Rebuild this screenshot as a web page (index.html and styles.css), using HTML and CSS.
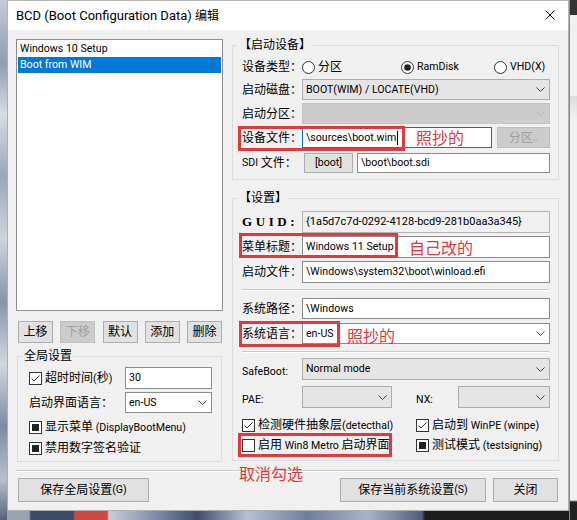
FILE: index.html
```html
<!DOCTYPE html>
<html lang="zh-CN">
<head>
<meta charset="utf-8">
<title>BCD 编辑</title>
<link rel="stylesheet" href="styles.css">
</head>
<body>
<div class="desktop">
  <div class="wall-left"></div>
  <div class="window">
    <div class="titlebar">
      <span class="title">BCD (Boot Configuration Data) <span class="zh">编辑</span></span>
      <svg class="close" width="10" height="10" viewBox="0 0 10 10"><path d="M0.5 0.5L9.5 9.5M9.5 0.5L0.5 9.5" stroke="#111" stroke-width="1" fill="none"/></svg>
    </div>
    <div class="client">
      <div class="cols">
        <div class="left">
          <div class="listbox">
            <div class="item en">Windows 10 Setup</div>
            <div class="item en sel">Boot from WIM</div>
          </div>
          <div class="btnrow">
            <button class="btn">上移</button>
            <button class="btn dis">下移</button>
            <button class="btn">默认</button>
            <button class="btn">添加</button>
            <button class="btn">删除</button>
          </div>
          <fieldset class="group global">
            <legend>全局设置</legend>
            <div class="grow h22">
              <span class="chk"><svg class="box" viewBox="0 0 13 13"><rect x="0.5" y="0.5" width="12" height="12" fill="#fff" stroke="#333"/><path d="M2.5 6.5L5 9L10.5 3.5" fill="none" stroke="#333"/></svg><span>超时时间<span class="en">(</span>秒<span class="en">)</span></span></span>
              <div class="field en">30</div>
            </div>
            <div class="grow h21 mt3">
              <span class="lbl">启动界面语言：</span>
              <div class="combo white"><span class="en">en-US</span><svg class="chev" viewBox="0 0 9 5"><path d="M0.5 0.5L4.5 4.5L8.5 0.5" fill="none" stroke="currentColor"/></svg></div>
            </div>
            <div class="chk h16 mt6"><svg class="box" viewBox="0 0 13 13"><rect x="0.5" y="0.5" width="12" height="12" fill="#fff" stroke="#333"/><rect x="3" y="3" width="7" height="7" fill="#222"/></svg><span>显示菜单<span class="en"> (DisplayBootMenu)</span></span></div>
            <div class="chk h16 mt5"><svg class="box" viewBox="0 0 13 13"><rect x="0.5" y="0.5" width="12" height="12" fill="#fff" stroke="#333"/><rect x="3" y="3" width="7" height="7" fill="#222"/></svg><span>禁用数字签名验证</span></div>
          </fieldset>
        </div>

        <div class="right">
          <fieldset class="group dev">
            <legend>【启动设备】</legend>
            <div class="row h16">
              <span class="lbl">设备类型：</span>
              <div class="radios">
                <span class="radio r1"><svg class="box" viewBox="0 0 13 13"><circle cx="6.5" cy="6.5" r="6" fill="#fff" stroke="#333"/></svg><span>分区</span></span>
                <span class="radio r2"><svg class="box" viewBox="0 0 13 13"><circle cx="6.5" cy="6.5" r="6" fill="#fff" stroke="#333"/><circle cx="6.5" cy="6.5" r="3.3" fill="#222"/></svg><span class="en">RamDisk</span></span>
                <span class="radio"><svg class="box" viewBox="0 0 13 13"><circle cx="6.5" cy="6.5" r="6" fill="#fff" stroke="#333"/></svg><span class="en">VHD(X)</span></span>
              </div>
            </div>
            <div class="row h21 mt4">
              <span class="lbl">启动磁盘：</span>
              <div class="combo"><span class="en">BOOT(WIM) / LOCATE(VHD)</span><svg class="chev" viewBox="0 0 9 5"><path d="M0.5 0.5L4.5 4.5L8.5 0.5" fill="none" stroke="currentColor"/></svg></div>
            </div>
            <div class="row h21 mt3">
              <span class="lbl">启动分区：</span>
              <div class="combo dis"><span></span><svg class="chev" viewBox="0 0 9 5"><path d="M0.5 0.5L4.5 4.5L8.5 0.5" fill="none" stroke="currentColor"/></svg></div>
            </div>
            <div class="row h21 mt3">
              <span class="lbl">设备文件：</span>
              <div class="pair file">
                <div class="field focus"><span class="en">\sources\boot.wim</span><span class="caret"></span></div>
                <button class="btn dis">分区<span class="en">..</span></button>
              </div>
            </div>
            <div class="row h20 mt5">
              <span class="lbl"><span class="en">SDI&nbsp;</span>文件：</span>
              <div class="pair sdi">
                <button class="btn"><span class="en">[boot]</span></button>
                <div class="field en">\boot\boot.sdi</div>
              </div>
            </div>
          </fieldset>

          <fieldset class="group set">
            <legend>【设置】</legend>
            <div class="row h22">
              <span class="lbl guid">GUID:</span>
              <div class="field ro guidval">{1a5d7c7d-0292-4128-bcd9-281b0aa3a345}</div>
            </div>
            <div class="row h22 mt3">
              <span class="lbl">菜单标题：</span>
              <div class="field en">Windows 11 Setup</div>
            </div>
            <div class="row h22 mt3">
              <span class="lbl">启动文件：</span>
              <div class="field en">\Windows\system32\boot\winload.efi</div>
            </div>
            <div class="hsep s1"></div>
            <div class="row h21 mt7">
              <span class="lbl">系统路径：</span>
              <div class="field en">\Windows</div>
            </div>
            <div class="row h21 mt4">
              <span class="lbl">系统语言：</span>
              <div class="combo white"><span class="en">en-US</span><svg class="chev" viewBox="0 0 9 5"><path d="M0.5 0.5L4.5 4.5L8.5 0.5" fill="none" stroke="currentColor"/></svg></div>
            </div>
            <div class="hsep s2"></div>
            <div class="row h21 mt5">
              <span class="lbl low en">SafeBoot:</span>
              <div class="combo"><span class="en">Normal mode</span><svg class="chev" viewBox="0 0 9 5"><path d="M0.5 0.5L4.5 4.5L8.5 0.5" fill="none" stroke="currentColor"/></svg></div>
            </div>
            <div class="row pae h21 mt7">
              <span class="lbl low en">PAE:</span>
              <div class="combo"><span></span><svg class="chev" viewBox="0 0 9 5"><path d="M0.5 0.5L4.5 4.5L8.5 0.5" fill="none" stroke="currentColor"/></svg></div>
              <span></span>
              <span class="lbl low en">NX:</span>
              <div class="combo"><span></span><svg class="chev" viewBox="0 0 9 5"><path d="M0.5 0.5L4.5 4.5L8.5 0.5" fill="none" stroke="currentColor"/></svg></div>
            </div>
            <div class="checks h16 mt10">
              <span class="chk"><svg class="box" viewBox="0 0 13 13"><rect x="0.5" y="0.5" width="12" height="12" fill="#fff" stroke="#333"/><path d="M2.5 6.5L5 9L10.5 3.5" fill="none" stroke="#333"/></svg><span>检测硬件抽象层<span class="en">(detecthal)</span></span></span>
              <span class="chk"><svg class="box" viewBox="0 0 13 13"><rect x="0.5" y="0.5" width="12" height="12" fill="#fff" stroke="#333"/><path d="M2.5 6.5L5 9L10.5 3.5" fill="none" stroke="#333"/></svg><span>启动到<span class="en"> WinPE (winpe)</span></span></span>
            </div>
            <div class="checks h16 mt4">
              <span class="chk"><svg class="box" viewBox="0 0 13 13"><rect x="0.5" y="0.5" width="12" height="12" fill="#fff" stroke="#333"/></svg><span>启用<span class="en"> Win8 Metro </span>启动界面</span></span>
              <span class="chk"><svg class="box" viewBox="0 0 13 13"><rect x="0.5" y="0.5" width="12" height="12" fill="#fff" stroke="#333"/><rect x="3" y="3" width="7" height="7" fill="#222"/></svg><span>测试模式<span class="en"> (testsigning)</span></span></span>
            </div>
          </fieldset>
        </div>
      </div>
      <div class="hsep bottom"></div>
      <div class="footer">
        <button class="btn big b1">保存全局设置<span class="en">(G)</span></button>
        <span class="spacer"></span>
        <button class="btn big b2">保存当前系统设置<span class="en">(S)</span></button>
        <button class="btn big b3">关闭</button>
      </div>
    </div>

    <div class="mark m1"></div>
    <div class="mark m2"></div>
    <div class="mark m3"></div>
    <div class="mark m4"></div>
    <div class="note n1">照抄的</div>
    <div class="note n2">自己改的</div>
    <div class="note n3">照抄的</div>
    <div class="note n4">取消勾选</div>
  </div>
  <div class="other"></div>
  <div class="wall-bottom"></div>
</div>
</body>
</html>
```

FILE: styles.css
```css
* { box-sizing: border-box; }
html, body { margin: 0; padding: 0; }
body {
  width: 577px;
  height: 520px;
  overflow: hidden;
  font-family: "Roboto", "Noto Sans CJK SC", sans-serif;
  font-size: 12px;
  line-height: 16px;
  color: #000;
  background: #5d6880;
}
.en { font-family: "Roboto", "Noto Sans CJK SC", sans-serif; font-size: 10.6px; }
.zh { font-family: "Noto Sans CJK SC", sans-serif; font-size: 12px; }

.desktop {
  display: grid;
  grid-template-columns: 7px 562px 8px;
  grid-template-rows: 511px 9px;
  width: 577px;
  height: 520px;
}
.wall-left {
  grid-row: 1 / 3;
  grid-column: 1;
  background: linear-gradient(to bottom, #c6ccd6 0, #8f9cb2 12%, #d8dce2 22%, #9aa6ba 34%, #cfd4db 46%, #8794aa 58%, #d3d7dd 70%, #7d8aa2 82%, #b8c0cc 92%, #59647c 100%);
}
.wall-bottom {
  grid-row: 2;
  grid-column: 2;
  background: linear-gradient(to right, #9aa3b0 0, #9aa3b0 22px, #3d4a68 24px, #3d4a68 66px, #d2483c 68px, #d2483c 100px, #c9ced8 102px, #7e8aa8 150px, #3f4c70 190px, #b7bfd2 240px, #6f7da0 300px, #a9b3c8 360px, #525e80 415px, #1c1c1c 418px, #1c1c1c 100%);
}
.other {
  grid-row: 1 / 3;
  grid-column: 3;
  background: linear-gradient(to bottom, #343434 0, #343434 15px, #f0f0f0 15px, #f0f0f0 96px, #dcdcdc 96px, #f0f0f0 120px, #f0f0f0 500px, #222 502px);
  border-left: 1px solid #8a8a8a;
}

.window {
  grid-row: 1;
  grid-column: 2;
  position: relative;
  background: #f0f0f0;
  display: flex;
  flex-direction: column;
  outline: 1px solid rgba(120, 120, 120, 0.55);
  outline-offset: -1px;
}

.titlebar {
  height: 30px;
  flex: none;
  background: #fff;
  display: flex;
  align-items: center;
  justify-content: space-between;
  padding: 0 14px 0 9px;
}
.title { font-size: 13px; line-height: 16px; white-space: nowrap; }
.close { display: block; }

.client {
  flex: 1;
  display: flex;
  flex-direction: column;
  padding: 7px 10px 9px 9px;
}
.cols {
  display: grid;
  grid-template-columns: 207px 327px;
  column-gap: 9px;
  align-items: start;
}

/* left column */
.left { padding-top: 2px; display: flex; flex-direction: column; }
.listbox {
  height: 272px;
  border: 1px solid #8e8f94;
  background: #fff;
  padding: 1px;
}
.item { height: 16px; line-height: 16px; padding-left: 2px; white-space: nowrap; }
.item.sel { background: #0078d7; color: #fff; }

.btn {
  font: inherit;
  color: #000;
  margin: 0;
  padding: 0;
  border: 1px solid #adadad;
  background: #e1e1e1;
  display: flex;
  align-items: center;
  justify-content: center;
  white-space: nowrap;
}
.btn.dis { background: #cccccc; border-color: #bfbfbf; color: #a0a0a0; }

.btnrow {
  margin-top: 10px;
  display: flex;
  justify-content: space-between;
  padding: 0 1px 0 2px;
}
.btnrow .btn { width: 35px; height: 22px; }

/* group boxes */
.group {
  margin: 0;
  min-width: 0;
  border: 1px solid #dcdcdc;
}
.group legend { line-height: 16px; height: 16px; white-space: nowrap; }

.global { margin: 5px 1px 0 1px; padding: 3px 9px 5px 11px; }
.global legend { padding: 0 1px; margin-left: -6px; }
.grow { display: grid; grid-template-columns: 96px 87px; }

.dev { padding: 6px 8px 6px 9px; }
.dev legend { padding: 0 2px; margin-left: -5px; }
.set { margin-top: 10px; padding: 5px 8px 7px 9px; }
.set legend { padding: 0 2px; margin-left: -5px; }

.row { display: grid; grid-template-columns: 60px 1fr; }
.row.pae { grid-template-columns: 60px 90px 24px 42px 92px; }
.checks { display: grid; grid-template-columns: 174px 1fr; }

.h16 { height: 16px; }
.h20 { height: 20px; }
.h21 { height: 21px; }
.h22 { height: 22px; }
.mt3 { margin-top: 3px; }
.mt4 { margin-top: 4px; }
.mt5 { margin-top: 5px; }
.mt6 { margin-top: 6px; }
.mt7 { margin-top: 7px; }
.mt10 { margin-top: 10px; }

.lbl { display: flex; align-items: center; white-space: nowrap; }
.lbl.low { padding-top: 6px; }
.lbl.guid {
  font-family: "Liberation Serif", "DejaVu Serif", serif;
  font-weight: bold;
  font-size: 13px;
  letter-spacing: 3.6px;
}

.chk { display: flex; align-items: center; white-space: nowrap; }
.box { width: 13px; height: 13px; flex: none; display: block; margin-right: 3px; }

.radios { display: flex; align-items: center; }
.radio { display: flex; align-items: center; white-space: nowrap; }
.radio .box { margin-right: 3px; }
.radio.r1 { width: 99px; }
.radio.r2 { width: 93px; }

.field {
  border: 1px solid #8c8c8c;
  background: #fff;
  padding: 0 3px;
  display: flex;
  align-items: center;
  white-space: nowrap;
  overflow: hidden;
  min-width: 0;
}
.field.focus { border-color: #0078d7; }
.field.ro { background: #f0f0f0; border-color: #b4b4b4; }
.field.guidval { font-family: "Roboto", sans-serif; font-size: 11px; }
.caret { width: 1px; height: 14px; background: #000; margin-left: 1px; }

.combo {
  border: 1px solid #adadad;
  background: #e5e5e5;
  display: flex;
  align-items: center;
  justify-content: space-between;
  padding: 0 4px 0 3px;
  white-space: nowrap;
  color: #000;
  min-width: 0;
}
.combo.white { background: #fff; border-color: #8c8c8c; }
.combo.dis { background: #cccccc; border-color: #c4c4c4; color: #b0b0b0; }
.chev { width: 9px; height: 5px; display: block; flex: none; color: #444; }
.combo.dis .chev { color: #b4b4b4; }

.pair { display: grid; }
.pair.file { grid-template-columns: 190px 53px; column-gap: 5px; }
.pair.sdi { grid-template-columns: 49px 193px; column-gap: 4px; padding-left: 2px; }

.hsep { height: 2px; border-top: 1px solid #c9c9c9; border-bottom: 1px solid #fff; }
.hsep.s1 { margin-top: 6px; margin-right: 1px; }
.hsep.s2 { margin-top: 7px; margin-right: 1px; }
.hsep.bottom { margin-top: 8px; }

.footer { margin-top: 6px; display: flex; padding: 0 1px 0 2px; }
.footer .btn { height: 24px; }
.b1 { width: 131px; }
.b2 { width: 146px; }
.b3 { width: 65px; margin-left: 7px; }
.spacer { flex: 1; }

/* red annotations drawn over the dialog */
.mark { position: absolute; border: 3px solid #e2393d; }
.m1 { left: 231px; top: 126px; width: 167px; height: 25px; }
.m2 { left: 232px; top: 233px; width: 159px; height: 25px; }
.m3 { left: 232px; top: 321px; width: 101px; height: 26px; }
.m4 { left: 231px; top: 433px; width: 154px; height: 24px; }

.note {
  position: absolute;
  color: #e2393d;
  font-family: "Noto Sans CJK SC", sans-serif;
  font-size: 16px;
  line-height: 16px;
  white-space: nowrap;
}
.n1 { left: 409px; top: 129px; }
.n2 { left: 402px; top: 239px; }
.n3 { left: 340px; top: 327px; }
.n4 { left: 232px; top: 465px; }
```
